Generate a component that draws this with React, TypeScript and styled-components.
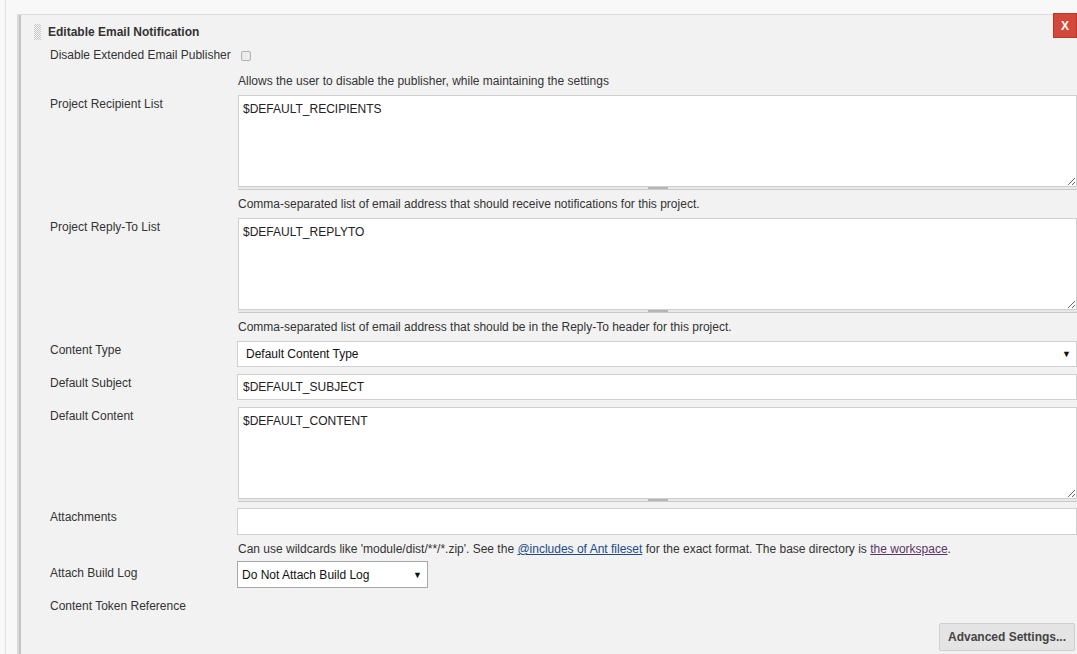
import styled, { createGlobalStyle } from 'styled-components';

const GlobalStyle = createGlobalStyle`
  html, body {
    margin: 0;
    padding: 0;
    background: #f8f8f8;
    overflow: hidden;
  }
  body {
    font-family: "Liberation Sans", Arial, sans-serif;
    font-size: 12px;
    color: #333;
  }
`;

const Page = styled.div`
  margin-left: 5px;
  border-left: 1px solid #e0e0e0;
  padding: 14px 0 0 11px;
  min-height: 100vh;
  box-sizing: border-box;
`;

const Section = styled.div`
  position: relative;
  background: #f2f2f2;
  border-top: 1px solid #dcdcdc;
  border-left: 2px solid #dadada;
  box-shadow: inset 2px 0 0 #c4c4c4;
  padding: 0 0 20px 31px;
  min-height: 700px;
`;

const CloseButton = styled.button`
  position: absolute;
  top: -2px;
  right: 0;
  width: 24px;
  height: 25px;
  border: 1px solid #b8392c;
  background: #d24939;
  color: #fff;
  font-family: "Liberation Sans", Arial, sans-serif;
  font-weight: 700;
  font-size: 12px;
  padding: 0;
  cursor: pointer;
`;

const Header = styled.div`
  display: flex;
  align-items: center;
  margin-left: -16px;
  padding-top: 9px;
  line-height: 16px;
  font-weight: 700;
  color: #333;
`;

const DragHandle = styled.span`
  width: 7px;
  height: 16px;
  margin-right: 7px;
  background: repeating-conic-gradient(#c9c9c9 0 25%, transparent 0 50%) 0 0 / 2px 2px;
`;

const Row = styled.div<{ $gap?: number }>`
  display: grid;
  grid-template-columns: 187px 1fr;
  margin-top: ${(p) => p.$gap ?? 7}px;
`;

const Label = styled.div<{ $offset?: number }>`
  line-height: 16px;
  padding-top: ${(p) => p.$offset ?? 1}px;
  color: #333;
`;

const HelpText = styled.div`
  grid-column: 2;
  line-height: 16px;
  padding-left: 1px;
  color: #333;

  a {
    text-decoration: underline;
  }
`;

const Link = styled.a<{ $visited?: boolean }>`
  color: ${(p) => (p.$visited ? '#5c3566' : '#204a87')};
`;

const Checkbox = styled.span`
  display: inline-block;
  width: 8px;
  height: 8px;
  margin: 5px 0 0 4px;
  border: 1px solid #b0b0b0;
  border-radius: 2px;
  background: #ececec;
`;

const TextAreaWrap = styled.div`
  padding-left: 1px;
`;

const TextArea = styled.textarea`
  display: block;
  width: 100%;
  height: 92px;
  box-sizing: border-box;
  border: 1px solid #cfcfcf;
  background: #fff;
  padding: 6px 4px;
  font-family: "Liberation Sans", Arial, sans-serif;
  font-size: 12px;
  line-height: 14px;
  color: #222;
`;

const ResizeBar = styled.div`
  position: relative;
  height: 2px;
  background: #e8e8e8;
  border-bottom: 1px solid #c9c9c9;

  &::after {
    content: '';
    position: absolute;
    left: 50%;
    top: 0;
    width: 20px;
    height: 2px;
    margin-left: -10px;
    background: #b5b5b5;
  }
`;

const TextInput = styled.input<{ $tall?: boolean }>`
  display: block;
  width: 100%;
  height: ${(p) => (p.$tall ? 27 : 26)}px;
  box-sizing: border-box;
  border: 1px solid #d0d0d0;
  background: #fff;
  padding: 0 5px;
  font-family: "Liberation Sans", Arial, sans-serif;
  font-size: 12px;
  color: #222;
`;

const SelectBox = styled.div<{ $width?: number; $dark?: boolean }>`
  display: flex;
  align-items: center;
  justify-content: space-between;
  width: ${(p) => (p.$width ? `${p.$width}px` : '100%')};
  height: ${(p) => (p.$dark ? 27 : 26)}px;
  box-sizing: border-box;
  border: 1px solid ${(p) => (p.$dark ? '#a9a9a9' : '#d0d0d0')};
  background: #fff;
  padding: 0 5px 0 ${(p) => (p.$dark ? 4 : 8)}px;
  color: #111;
`;

const Arrow = styled.span`
  font-size: 9px;
  color: #111;
`;

const Footer = styled.div`
  display: flex;
  justify-content: flex-end;
  margin-top: 9px;
  padding-right: 2px;
`;

const AdvancedButton = styled.button`
  height: 28px;
  padding: 0 8px;
  border: 1px solid #cfcfcf;
  border-radius: 2px;
  background: #e4e4e4;
  font-family: "Liberation Sans", Arial, sans-serif;
  font-weight: 700;
  font-size: 12px;
  color: #444;
`;

function App() {
  return (
    <>
      <GlobalStyle />
      <Page>
        <Section>
          <CloseButton>X</CloseButton>
          <Header>
            <DragHandle />
            Editable Email Notification
          </Header>

          <Row $gap={6}>
            <Label>Disable Extended Email Publisher</Label>
            <div>
              <Checkbox />
            </div>
          </Row>
          <Row $gap={9}>
            <HelpText>Allows the user to disable the publisher, while maintaining the settings</HelpText>
          </Row>

          <Row $gap={6}>
            <Label>Project Recipient List</Label>
            <TextAreaWrap>
              <TextArea defaultValue="$DEFAULT_RECIPIENTS" />
              <ResizeBar />
            </TextAreaWrap>
          </Row>
          <Row $gap={6}>
            <HelpText>
              Comma-separated list of email address that should receive notifications for this project.
            </HelpText>
          </Row>

          <Row $gap={6}>
            <Label>Project Reply-To List</Label>
            <TextAreaWrap>
              <TextArea defaultValue="$DEFAULT_REPLYTO" />
              <ResizeBar />
            </TextAreaWrap>
          </Row>
          <Row $gap={6}>
            <HelpText>
              Comma-separated list of email address that should be in the Reply-To header for this project.
            </HelpText>
          </Row>

          <Row $gap={6}>
            <Label>Content Type</Label>
            <SelectBox>
              Default Content Type
              <Arrow>▼</Arrow>
            </SelectBox>
          </Row>

          <Row>
            <Label>Default Subject</Label>
            <TextInput defaultValue="$DEFAULT_SUBJECT" />
          </Row>

          <Row>
            <Label>Default Content</Label>
            <TextAreaWrap>
              <TextArea defaultValue="$DEFAULT_CONTENT" />
              <ResizeBar />
            </TextAreaWrap>
          </Row>

          <Row $gap={6}>
            <Label>Attachments</Label>
            <TextInput $tall />
          </Row>
          <Row $gap={6}>
            <HelpText>
              Can use wildcards like 'module/dist/**/*.zip'. See the{' '}
              <Link href="#">@includes of Ant fileset</Link> for the exact format. The base directory is{' '}
              <Link href="#" $visited>
                the workspace
              </Link>
              .
            </HelpText>
          </Row>

          <Row $gap={4}>
            <Label $offset={4}>Attach Build Log</Label>
            <SelectBox $width={191} $dark>
              Do Not Attach Build Log
              <Arrow>▼</Arrow>
            </SelectBox>
          </Row>

          <Row $gap={9}>
            <Label>Content Token Reference</Label>
          </Row>

          <Footer>
            <AdvancedButton>Advanced Settings...</AdvancedButton>
          </Footer>
        </Section>
      </Page>
    </>
  );
}

export default App;
